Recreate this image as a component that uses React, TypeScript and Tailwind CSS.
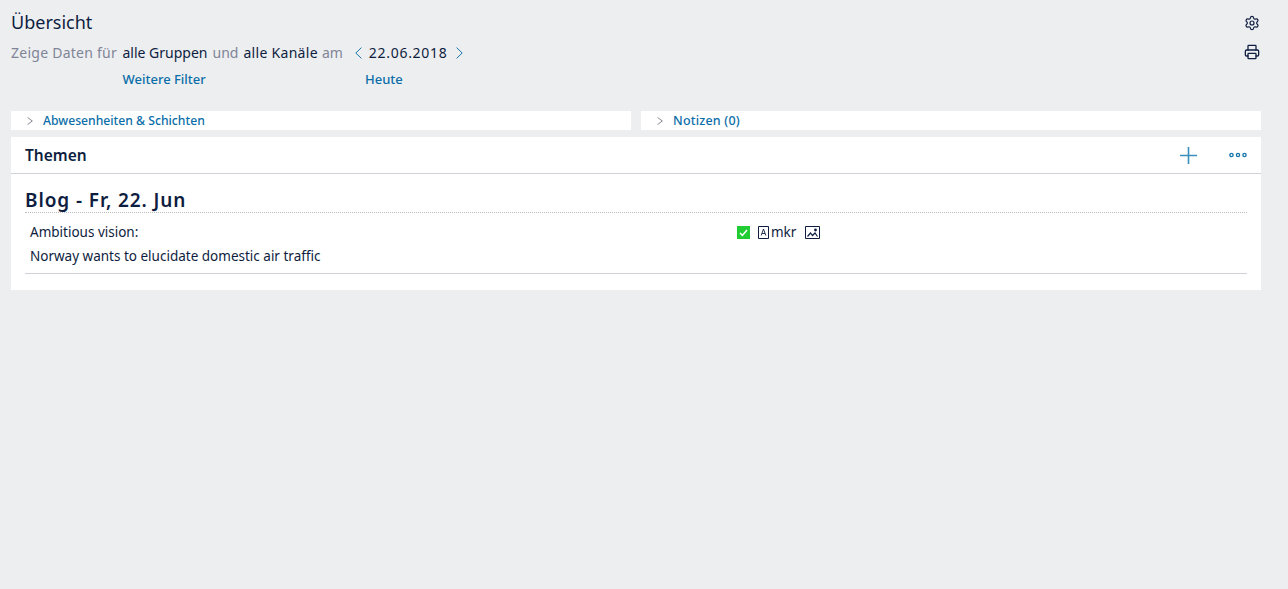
import { Settings, Printer } from "lucide-react";

function Chevron({ dir, w, h, className }: { dir: "l" | "r"; w: number; h: number; className: string }) {
  return (
    <svg width={w} height={h} viewBox="0 0 6 10" preserveAspectRatio="none" fill="none" stroke="currentColor" strokeWidth="0.8" className={className}>
      <path d={dir === "l" ? "M5.5.5L.7 5l4.8 4.5" : "M.5.5L5.3 5 .5 9.5"} />
    </svg>
  );
}

function Collapsed({ label, textClass }: { label: string; textClass: string }) {
  return (
    <div className="flex h-[19px] flex-1 items-center bg-white pl-[16px]">
      <Chevron dir="r" w={6} h={8} className="mr-[10px] text-[#555b66]" />
      <span className={textClass}>{label}</span>
    </div>
  );
}

export default function App() {
  return (
    <div className="min-h-[589px] bg-[#edeef0] pl-[11px] pr-[27px] font-['Noto_Sans',sans-serif] text-[#0e1d40]">
      <div className="flex justify-between">
        <div>
          <h1 className="pt-[10px] text-[18px] leading-[24px]">Übersicht</h1>
          <div className="mt-[7px] flex h-[24px] items-center text-[14px] leading-[24px]">
            <span className="w-[111.5px] tracking-[0.25px] text-[#7f8597]">Zeige Daten für</span>
            <span>alle Gruppen</span>
            <span className="ml-[5px] text-[#7f8597]">und</span>
            <span className="ml-[5px] tracking-[0.3px]">alle Kanäle</span>
            <span className="ml-[4px] text-[#7f8597]">am</span>
            <Chevron dir="l" w={7} h={12} className="ml-[12px] text-[#0b6ea8]" />
            <span className="ml-[7px] tracking-[0.7px]">22.06.2018</span>
            <Chevron dir="r" w={7} h={12} className="ml-[9px] text-[#0b6ea8]" />
          </div>
          <div className="mt-[4px] flex h-[20px] items-center text-[13px] font-medium leading-[20px] text-[#0b6ea8]">
            <span className="ml-[111.5px] w-[242.5px]">Weitere Filter</span>
            <span>Heute</span>
          </div>
        </div>
        <div className="flex flex-col items-center gap-[13px] pt-[15px] pr-[1px]">
          <Settings size={16} strokeWidth={1.8} />
          <Printer size={16} strokeWidth={1.9} />
        </div>
      </div>

      <div className="mt-[22px] flex gap-[10px]">
        <Collapsed label="Abwesenheiten & Schichten" textClass="text-[12.2px] font-medium leading-[19px] text-[#0b6ea8]" />
        <Collapsed label="Notizen (0)" textClass="text-[12.5px] font-medium leading-[19px] tracking-[0.2px] text-[#0b6ea8]" />
      </div>

      <section className="mt-[7px] h-[153px] bg-white">
        <div className="flex h-[37px] items-center justify-between border-b border-[#cfd2d8] pl-[14px] pr-[14px]">
          <h2 className="text-[15.5px] font-semibold leading-[36px]">Themen</h2>
          <div className="flex items-center gap-[32px] text-[#3a8fbb]">
            <svg width="17" height="17" viewBox="0 0 17 17" fill="none" stroke="currentColor" strokeWidth="1.6">
              <path d="M8.5 0v17M0 8.5h17" />
            </svg>
            <svg width="18" height="6" viewBox="0 0 18 6" fill="none" stroke="#1a78ab" strokeWidth="1.4">
              <circle cx="2.5" cy="3" r="1.6" />
              <circle cx="9" cy="3" r="1.6" />
              <circle cx="15.5" cy="3" r="1.6" />
            </svg>
          </div>
        </div>
        <div className="px-[14px]">
          <h3 className="mt-[14px] h-[25px] border-b border-dotted border-[#b8bbc0] text-[19px] font-semibold leading-[25px] tracking-[0.9px]">
            Blog - Fr, 22. Jun
          </h3>
          <div className="flex h-[61px] border-b border-[#cfd2d8] pl-[5px] text-[13.5px]">
            <div className="w-[707px] pt-[7px] leading-[24px]">
              <p>Ambitious vision:</p>
              <p>Norway wants to elucidate domestic air traffic</p>
            </div>
            <div className="flex h-[24px] items-start pt-[13px]">
              <div className="flex h-[13px] w-[13px] items-center justify-center bg-[#22cc33]">
                <svg width="9" height="8" viewBox="0 0 9 8" fill="none" stroke="white" strokeWidth="1.6">
                  <path d="M1 4l2.4 2.4L8 1" />
                </svg>
              </div>
              <svg className="ml-[8px]" width="11" height="13" viewBox="0 0 11 13" fill="none" stroke="#0e1d40">
                <path d="M.5.5h10v12H.5z" />
                <path d="M3.2 9.5L5.5 3l2.3 6.5M4 7.5h3" strokeWidth=".9" />
              </svg>
              <span className="-mt-[3px] ml-[2px] leading-[18px]">mkr</span>
              <svg className="ml-[9px]" width="15" height="13" viewBox="0 0 15 13" fill="none" stroke="#0e1d40">
                <path d="M.5.5h14v12H.5z" />
                <path d="M2.5 10.5l3-3.5 2 2.5 2.5-2.5 2.5 3.5" strokeWidth="1.2" />
                <circle cx="10.5" cy="4" r="1.4" fill="#0e1d40" stroke="none" />
              </svg>
            </div>
          </div>
        </div>
      </section>
    </div>
  );
}
